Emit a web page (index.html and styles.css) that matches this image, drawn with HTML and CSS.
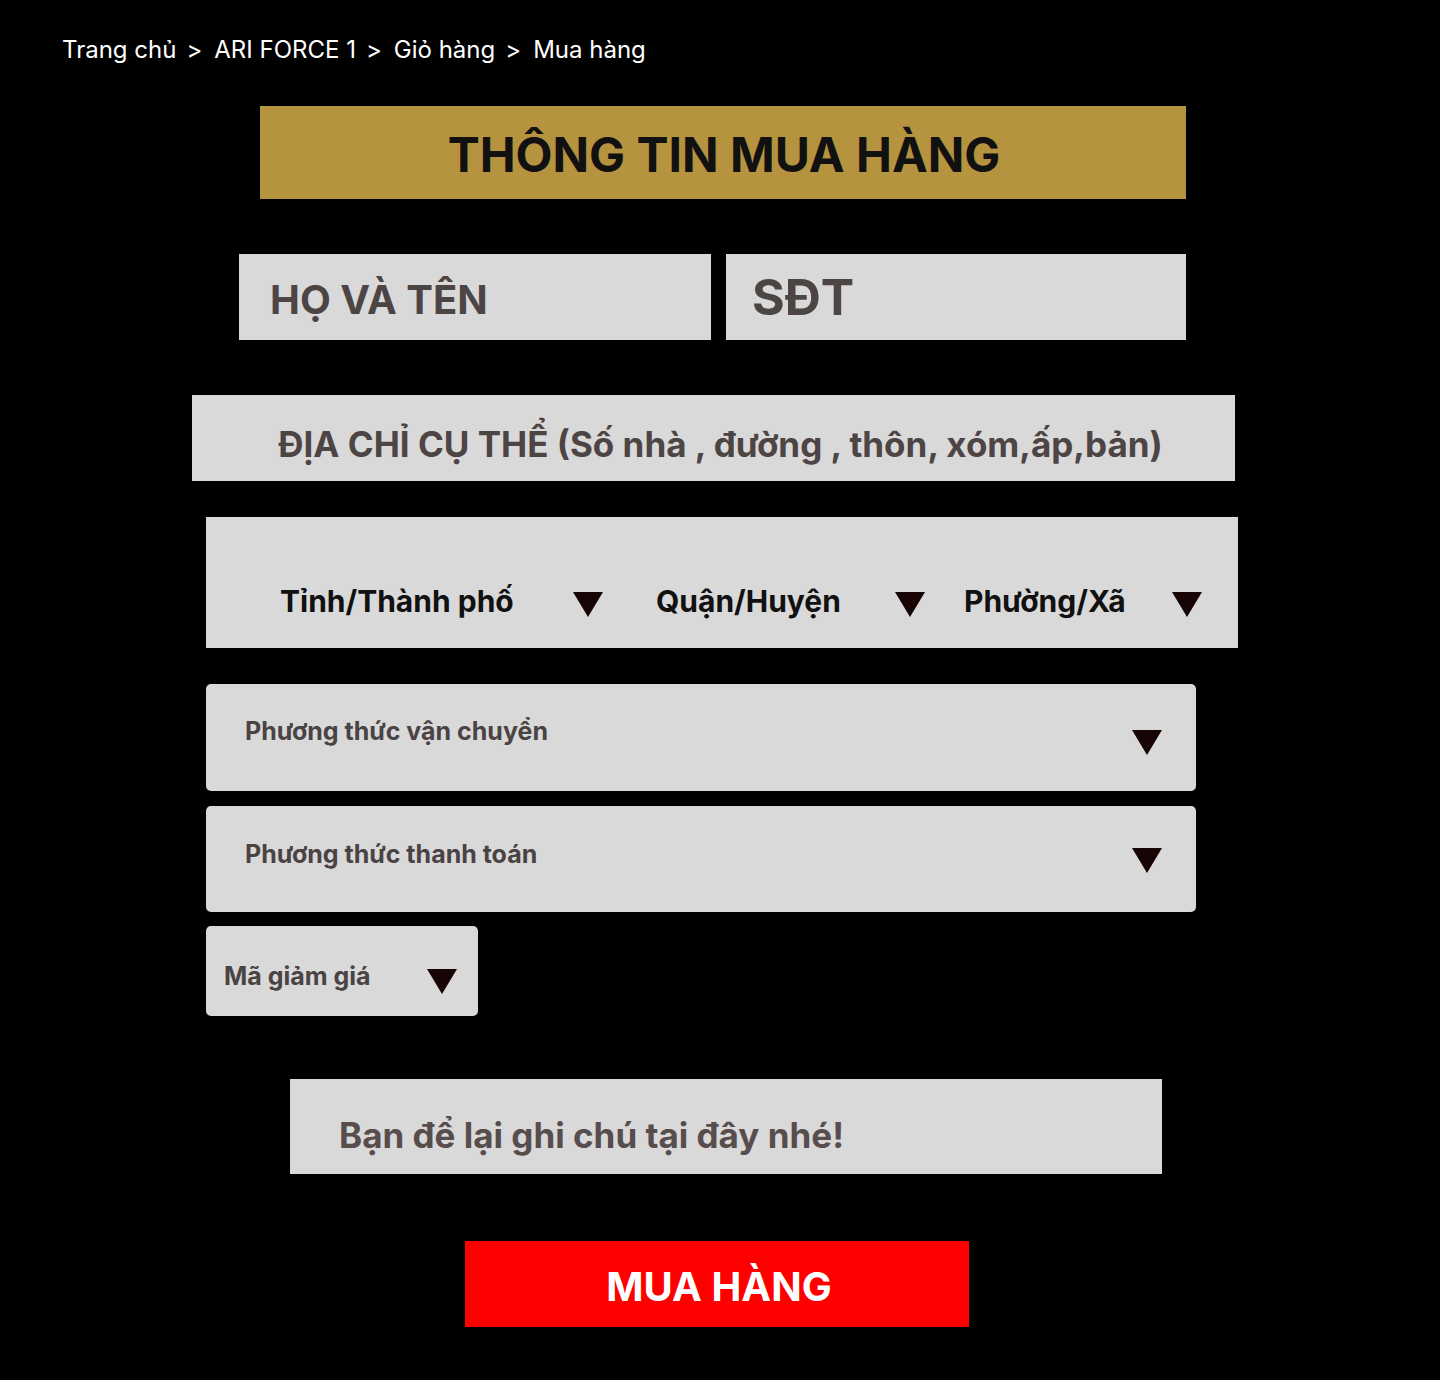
FILE: index.html
```html
<!DOCTYPE html>
<html lang="vi">
<head>
<meta charset="utf-8">
<title>Thông tin mua hàng</title>
<link rel="stylesheet" href="styles.css">
</head>
<body>
<nav class="breadcrumb">Trang chủ<span class="sep">&gt;</span>ARI FORCE 1<span class="sep">&gt;</span>Giỏ hàng<span class="sep">&gt;</span>Mua hàng</nav>
<main class="form">
  <h1 class="title">THÔNG TIN MUA HÀNG</h1>
  <div class="row-name">
    <div class="field field-name">HỌ VÀ TÊN</div>
    <div class="field field-phone">SĐT</div>
  </div>
  <div class="field field-address">ĐỊA CHỈ CỤ THỂ (Số nhà , đường , thôn, xóm,ấp,bản)</div>
  <div class="location">
    <div class="loc loc-1"><span>Tỉnh/Thành phố</span><svg class="tri" viewBox="0 0 30 25"><polygon points="0,0 30,0 15,25"/></svg></div>
    <div class="loc loc-2"><span>Quận/Huyện</span><svg class="tri" viewBox="0 0 30 25"><polygon points="0,0 30,0 15,25"/></svg></div>
    <div class="loc loc-3"><span>Phường/Xã</span><svg class="tri" viewBox="0 0 30 25"><polygon points="0,0 30,0 15,25"/></svg></div>
  </div>
  <div class="select select-ship"><span>Phương thức vận chuyển</span><svg class="tri" viewBox="0 0 30 25"><polygon points="0,0 30,0 15,25"/></svg></div>
  <div class="select select-pay"><span>Phương thức thanh toán</span><svg class="tri" viewBox="0 0 30 25"><polygon points="0,0 30,0 15,25"/></svg></div>
  <div class="select select-code"><span>Mã giảm giá</span><svg class="tri" viewBox="0 0 30 25"><polygon points="0,0 30,0 15,25"/></svg></div>
  <div class="note">Bạn để lại ghi chú tại đây nhé!</div>
  <button class="buy">MUA HÀNG</button>
</main>
</body>
</html>
```
FILE: styles.css
```css
* { box-sizing: border-box; }
html, body { margin: 0; padding: 0; }
body {
  background: #000;
  width: 1440px;
  min-height: 1380px;
  font-family: Inter, "Noto Sans", sans-serif;
  color: #fff;
}
.breadcrumb {
  padding: 35px 0 0 62px;
  font-size: 24px;
  line-height: 29px;
  font-weight: 400;
  color: #fff;
}
.sep {
  margin: 0 12px 0 10px;
}
.form {
  display: flex;
  flex-direction: column;
  align-items: flex-start;
}
.title {
  margin: 42px 0 0 260px;
  width: 926px;
  height: 93px;
  background: #b5933f;
  color: #111;
  font-size: 48px;
  font-weight: 700;
  display: flex;
  align-items: center;
  justify-content: center;
  padding-top: 4px;
  padding-left: 2px;
}
.field {
  background: #d9d9d9;
  color: #4d4444;
  display: flex;
  align-items: center;
}
.row-name {
  margin: 55px 0 0 239px;
  display: flex;
  gap: 15px;
}
.field-name {
  width: 472px;
  height: 86px;
  font-size: 40px;
  font-weight: 700;
  padding: 4px 0 0 31px;
}
.field-phone {
  width: 460px;
  height: 86px;
  font-size: 50px;
  font-weight: 700;
  padding: 0 0 0 26px;
}
.field-address {
  margin: 55px 0 0 192px;
  width: 1043px;
  height: 86px;
  font-size: 35px;
  font-weight: 700;
  justify-content: center;
  padding: 12px 0 0 14px;
}
.tri {
  width: 30px;
  height: 25px;
  fill: #170404;
  flex: none;
}
.location {
  margin: 36px 0 0 206px;
  width: 1032px;
  height: 131px;
  background: #d9d9d9;
  display: flex;
  padding: 66px 0 0 74px;
  color: #111;
  font-size: 30px;
  font-weight: 700;
  line-height: 36px;
}
.loc {
  display: flex;
  justify-content: space-between;
  align-items: flex-start;
}
.loc .tri { margin-top: 9px; }
.loc-1 { width: 323px; }
.loc-2 { width: 269px; margin-left: 53px; }
.loc-3 { width: 238px; margin-left: 39px; }
.select {
  margin-left: 206px;
  background: #d9d9d9;
  border-radius: 5px;
  color: #4a4343;
  font-size: 25px;
  font-weight: 700;
  line-height: 30px;
  display: flex;
  justify-content: space-between;
  align-items: flex-start;
}
.select-ship {
  margin-top: 36px;
  width: 990px;
  height: 107px;
  padding: 32px 34px 0 39px;
}
.select-ship .tri { margin-top: 14px; }
.select-pay {
  margin-top: 15px;
  width: 990px;
  height: 106px;
  padding: 33px 34px 0 39px;
}
.select-pay .tri { margin-top: 9px; }
.select-code {
  margin-top: 14px;
  width: 272px;
  height: 90px;
  padding: 35px 21px 0 18px;
}
.select-code .tri { margin-top: 8px; }
.note {
  margin: 63px 0 0 290px;
  width: 872px;
  height: 95px;
  background: #d9d9d9;
  color: #574d4d;
  font-size: 35px;
  font-weight: 700;
  line-height: 42px;
  padding: 35px 0 0 49px;
}
.buy {
  margin: 67px 0 0 465px;
  width: 504px;
  height: 86px;
  background: #ff0000;
  border: none;
  color: #fff;
  font-family: Inter, "Noto Sans", sans-serif;
  font-size: 40px;
  font-weight: 700;
  padding: 4px 0 0 4px;
}
```
